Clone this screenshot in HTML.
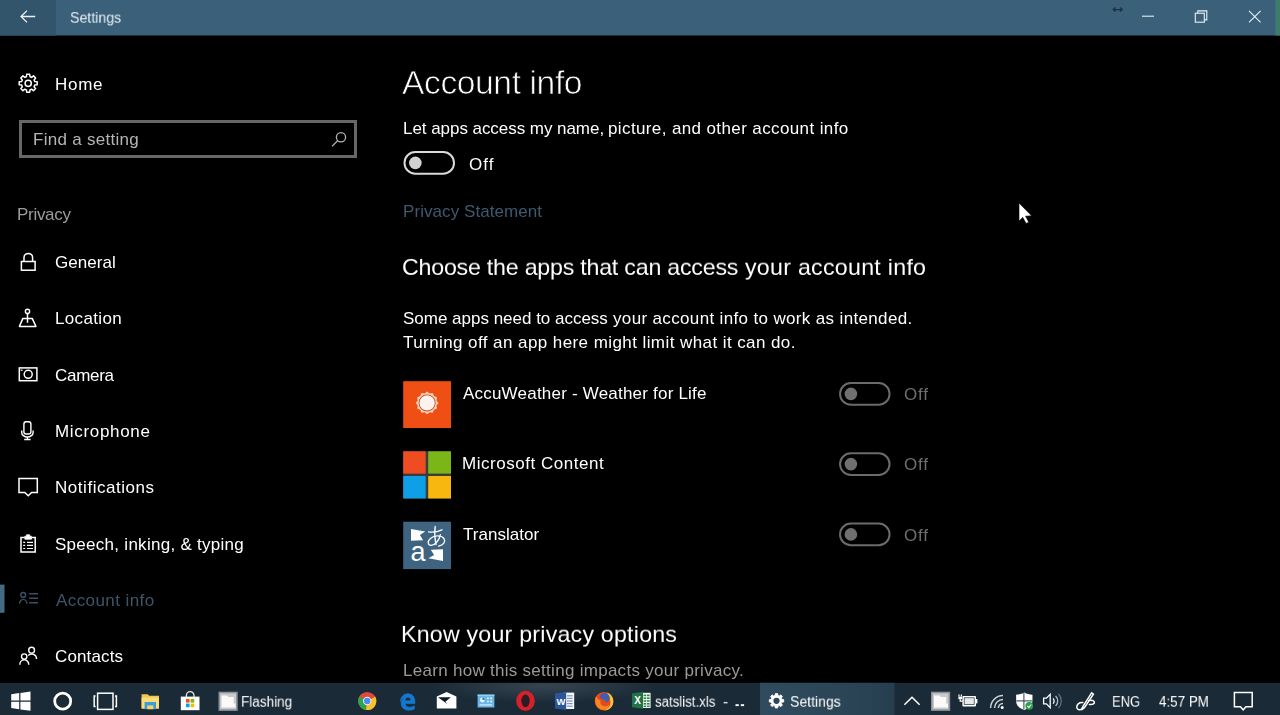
<!DOCTYPE html>
<html><head><meta charset="utf-8">
<style>
*{box-sizing:border-box;margin:0;padding:0}
html,body{width:1280px;height:715px;overflow:hidden;background:#000;font-family:"Liberation Sans",sans-serif;color:#fff}
.abs{position:absolute}
.t{position:absolute;white-space:nowrap;will-change:transform}
svg{position:absolute;left:0;top:0;overflow:visible}
</style></head><body>
<!-- search box -->
<div class="abs" style="left:19px;top:120px;width:338px;height:38px;border:3px solid #676767"></div>

<svg width="1280" height="715" viewBox="0 0 1280 715" fill="none" stroke="#fff" stroke-width="1.5">
<defs><linearGradient id="ab" x1="0" x2="1" y1="0" y2="0"><stop offset="0" stop-color="#2f4b5d"/><stop offset="0.7" stop-color="#2a4455"/><stop offset="1" stop-color="#263f50"/></linearGradient><radialGradient id="cl" cx="0.5" cy="0.5" r="0.5"><stop offset="0" stop-color="#8c9ba5" stop-opacity="0.24"/><stop offset="1" stop-color="#8c9ba5" stop-opacity="0"/></radialGradient><clipPath id="tb"><rect x="0" y="682.8" width="1280" height="32.2"/></clipPath></defs>
<g stroke="none"><rect x="0" y="0" width="1280" height="35.5" fill="#3b607a"/><rect x="0" y="0" width="56" height="35.5" fill="#33556b"/><rect x="1275.5" y="0" width="4.5" height="35.5" fill="#3f7d6b"/><rect x="0" y="584.6" width="4.5" height="28.2" fill="#456a83"/><rect x="403.2" y="381.2" width="47.8" height="46.8" fill="#ef4f14"/><rect x="403.2" y="451.3" width="47.8" height="47.2" fill="#3c3c38"/><rect x="403.2" y="451.3" width="22.5" height="22.3" fill="#f04c22"/><rect x="428.2" y="451.3" width="22.8" height="22.3" fill="#7cb518"/><rect x="403.2" y="476" width="22.5" height="22.5" fill="#0f9fe6"/><rect x="428.2" y="476" width="22.8" height="22.5" fill="#f8b70f"/><rect x="403.2" y="521.7" width="47.8" height="47.4" fill="#3f6482"/><rect x="0" y="682.8" width="1280" height="32.2" fill="#1a2a36"/><ellipse cx="545" cy="686" rx="115" ry="17" fill="url(#cl)" clip-path="url(#tb)"/><rect x="760" y="682.8" width="134.6" height="32.2" fill="url(#ab)"/></g>
<g stroke="#e8f1f6" stroke-width="1.3"><path d="M21 16.5H35.2M27 10.6L21 16.5L27 22.4"/></g>
<g stroke="#e8f1f6" stroke-width="1.1"><path d="M1142 16.2H1154"/><rect x="1195.3" y="13.2" width="9" height="9"/><path d="M1197.8 13.2V10.9H1206.8V19.9H1204.3"/><path d="M1249 10.8L1260.6 22.4M1260.6 10.8L1249 22.4"/></g>
<g stroke="#1d3243" stroke-width="1.4"><path d="M1113.5 9.6H1122M1115.5 7.6L1113.3 9.6L1115.5 11.6M1120 7.6L1122.2 9.6L1120 11.6"/></g>
<path d="M26.41 76.74 L26.71 74.32 L29.69 74.32 L29.99 76.74 L31.57 77.39 L33.49 75.90 L35.60 78.01 L34.11 79.93 L34.76 81.51 L37.18 81.81 L37.18 84.79 L34.76 85.09 L34.11 86.67 L35.60 88.59 L33.49 90.70 L31.57 89.21 L29.99 89.86 L29.69 92.28 L26.71 92.28 L26.41 89.86 L24.83 89.21 L22.91 90.70 L20.80 88.59 L22.29 86.67 L21.64 85.09 L19.22 84.79 L19.22 81.81 L21.64 81.51 L22.29 79.93 L20.80 78.01 L22.91 75.90 L24.83 77.39Z" stroke-width="1.5" stroke-linejoin="round"/><circle cx="28.2" cy="83.3" r="3.1" stroke-width="1.5"/>
<g stroke="#b4b4b4" stroke-width="1.3"><circle cx="341" cy="137.3" r="4.6"/><path d="M337.6 140.8L332 146.4"/></g>
<rect x="21.400" y="261.500" width="13.700" height="8.700"/><path d="M24 261.500V257.600a4.300 4.200 0 0 1 8.600 0V261.500"/>
<circle cx="27.5" cy="311.4" r="2.1" stroke-width="1.4"/><path d="M27.5 313.6V322.8"/><path d="M22.9 318.4L19.4 326.4H35.9L32.2 318.4Z" stroke-linejoin="round"/>
<rect x="19.3" y="367.9" width="17.6" height="12.8"/><circle cx="28.2" cy="374.3" r="4"/><path d="M20.6 370.2H22.6" stroke-width="1.2"/>
<g stroke-width="1.4"><rect x="23.9" y="421.8" width="7" height="12.2" rx="2.2"/><path d="M21.700 430.600V432.400a5.700 4.600 0 0 0 11.400 0V430.600M27.400 437V439.600M24.200 439.500H30.600"/></g>
<path d="M19 478.4H37.3V492.4H31.6L28.2 495.8L24.8 492.4H19Z"/>
<path d="M24.600 537.400H21V552H35.200V537.400H31.600"/><path d="M24.800 539.200V536.200H26.600V534.800H29.700V536.200H31.500V539.200Z" fill="#fff" stroke-width="0.8"/><g stroke-width="1.200"><path d="M23.200 542.300H25.200M27 542.300H33M23.200 545.400H25.200M27 545.400H33M23.200 548.500H25.200M27 548.500H33"/></g>
<g stroke="#3c5064" stroke-width="1.400"><circle cx="23.200" cy="594.900" r="2.400"/><path d="M19.500 603.800a3.700 4.400 0 0 1 7.400 0"/><path d="M29.200 593.700H38M29.200 598.200H38M29.200 602.700H38"/></g>
<g stroke-width="1.4"><circle cx="31.6" cy="650.2" r="2.9"/><path d="M28.2 655.4a5 5 0 0 1 8.4 3.6"/><circle cx="24.2" cy="656.6" r="2.7"/><path d="M19.8 664.8a4.5 5 0 0 1 9 0"/></g>
<path d="M427.10 391.50 L429.61 393.53 L432.80 393.03 L433.96 396.04 L436.97 397.20 L436.47 400.39 L438.50 402.90 L436.47 405.41 L436.97 408.60 L433.96 409.76 L432.80 412.77 L429.61 412.27 L427.10 414.30 L424.59 412.27 L421.40 412.77 L420.24 409.76 L417.23 408.60 L417.73 405.41 L415.70 402.90 L417.73 400.39 L417.23 397.20 L420.24 396.04 L421.40 393.03 L424.59 393.53Z" fill="#fbd3bc" stroke="none"/><circle cx="427.1" cy="402.9" r="8.5" fill="#b8400f" stroke="none"/><circle cx="427.1" cy="402.9" r="7.7" fill="#fdf3ee" stroke="none"/>
<g fill="#fff" stroke="none"><path d="M411 529L425.2 531.4L419.9 535.1L423.1 540.3L411 540.7Z"/><path d="M443 561L428.4 558.2L434.1 554.9L430.8 549.7L443 549.3Z"/></g>
<text x="410.4" y="561.2" font-family="Liberation Sans" font-size="27" fill="#fff" stroke="none">a</text>
<g stroke="#fff" stroke-width="1.3" fill="none" stroke-linecap="round"><path d="M428.6 531.8C433 532.4 438 531.6 442 529.8"/><path d="M435.2 526.4C434.4 532 434.6 538 436 544.6"/><path d="M440.4 534.6C439.4 540 435 545.4 431.2 545.4C427.8 545.4 427 541.4 430.4 538.4C434.2 535.2 441.4 535 444 538.6C446 541.8 443.4 545 438.6 546.2"/></g>
<g fill="#fff" stroke="none"><path d="M11.2 694.2L19.2 693.1V700.5H11.2Z"/><path d="M20.4 692.9L30.5 691.5V700.5H20.4Z"/><path d="M11.2 701.7H19.2V709.2L11.2 708.1Z"/><path d="M20.4 701.7H30.5V710.8L20.4 709.4Z"/></g>
<circle cx="62.7" cy="701.2" r="8" stroke="#fff" stroke-width="2.8"/>
<g stroke="#fff" stroke-width="1.5"><rect x="97.6" y="693.2" width="15.4" height="16.2"/><path d="M95.6 696H94.2V706.6H95.6M115 696H116.4V706.6H115"/></g>
<g stroke="none"><path d="M141.6 694.2H147.6L149.2 695.8H159V708.6H141.6Z" fill="#f5c64b"/><path d="M141.6 697.6H159V708.6H141.6Z" fill="#fbdc7a"/><path d="M144.6 702H156V709.2H144.6Z" fill="#3d9bd8"/><path d="M147.2 705.4H153.4V709.2H147.2Z" fill="#f5d36a"/></g>
<g><path d="M186.4 697V695.4a3.8 3.8 0 0 1 7.6 0V697" stroke="#e8e8e8" stroke-width="1.3" fill="none"/><path d="M180.8 696.6H199.5V710.2H180.8Z" fill="#fff" stroke="none"/><g stroke="none"><rect x="186" y="699" width="3.6" height="3.6" fill="#f25022"/><rect x="190.6" y="699" width="3.6" height="3.6" fill="#7fba00"/><rect x="186" y="703.6" width="3.6" height="3.6" fill="#00a4ef"/><rect x="190.6" y="703.6" width="3.6" height="3.6" fill="#ffb900"/></g></g>
<g stroke="none"><rect x="218.5" y="691.7" width="19.2" height="19.2" fill="#8f9296"/><rect x="220.1" y="693.3" width="16" height="16" fill="#c9cbcd"/><path d="M221.5 695.6H227.0L228.3 697H233.7V704L235.5 703V707.4H221.5Z" fill="#fafafa"/></g>
<g stroke="none"><rect x="931" y="691.7" width="19.2" height="19.2" fill="#8f9296"/><rect x="932.6" y="693.3" width="16" height="16" fill="#c9cbcd"/><path d="M934 695.6H939.5L940.8 697H946.2V704L948 703V707.4H934Z" fill="#fafafa"/></g>
<g stroke="none"><circle cx="367.2" cy="701" r="9.1" fill="#dd4b3e"/><path d="M367.2 701L359.3 696.5A9.1 9.1 0 0 0 366 710Z" fill="#2da44e"/><path d="M367.2 701L366 710A9.1 9.1 0 0 0 375.2 696.6Z" fill="#f7c12c"/><path d="M367.2 701L375.2 696.6L366 696.6Z" fill="#dd4b3e"/><circle cx="367.2" cy="701" r="4.2" fill="#f1f1f1"/><circle cx="367.2" cy="701" r="3.2" fill="#4a8af4"/></g>
<g stroke="none"><path d="M400.4 701.4C400.8 696.6 404 693.8 407.8 693.8C412.4 693.8 414.9 697.2 414.9 702V703.6H405C405.2 706 407 707.2 409.6 707.2C411.4 707.2 413 706.8 414.4 706V709C412.8 709.8 411 710.2 408.8 710.2C404 710.2 401 707.2 401.2 702.6C401.4 700 403 698 405.2 696.8C403 697.4 401.2 699 400.4 701.4ZM405 700.8H410.8C410.8 698.6 409.8 697.2 408 697.2C406.2 697.2 405.2 698.8 405 700.8Z" fill="#1677cf" stroke="#1677cf" stroke-width="0.7"/></g>
<g stroke="none"><path d="M436.8 696.6L446.6 692L456.4 696.6V708.4H436.8Z" fill="#fff"/><path d="M438 697.2L450.8 697.2L445.4 701.8L447.6 704.2Z" fill="#0d1b27"/></g>
<g stroke="none"><rect x="477.6" y="694.6" width="16.8" height="12.9" fill="#6ab4ea"/><rect x="477.6" y="694.6" width="16.8" height="1.4" fill="#8fd0f5"/><circle cx="482.4" cy="700" r="2.4" fill="#e9f6ff"/><path d="M482.4 700V697.6A2.4 2.4 0 0 1 484.8 700Z" fill="#2d7fc0"/><rect x="487" y="697.4" width="1.8" height="1.8" fill="#d7f5d0"/><rect x="490.2" y="697.4" width="1.8" height="1.8" fill="#d7f5d0"/><rect x="487" y="700.6" width="1.8" height="1.8" fill="#d7f5d0"/><rect x="490.2" y="700.6" width="1.8" height="1.8" fill="#d7f5d0"/><rect x="479.6" y="704.2" width="12.6" height="1.4" fill="#c7e6fa"/></g>
<g stroke="none"><ellipse cx="525.5" cy="700.9" rx="9.3" ry="10.1" fill="#d8202a"/><ellipse cx="525.5" cy="700.9" rx="4.2" ry="6.3" fill="#2a1d26"/></g>
<g stroke="none"><rect x="563.4" y="692.6" width="10.8" height="16.4" fill="#f4f6fa"/><g fill="#7f96bd"><rect x="567" y="695.2" width="5.6" height="1.2"/><rect x="567" y="697.8" width="5.6" height="1.2"/><rect x="567" y="700.4" width="5.6" height="1.2"/><rect x="567" y="703" width="5.6" height="1.2"/><rect x="567" y="705.6" width="5.6" height="1.2"/></g><path d="M555 693.6L566.2 692V710L555 708.4Z" fill="#2b579a"/></g>
<text x="556.6" y="705" font-family="Liberation Sans" font-weight="bold" font-size="9.5" fill="#fff" stroke="none">W</text>
<g stroke="none"><circle cx="604" cy="701.2" r="9.3" fill="#e8471f"/><path d="M607 692.400C611.600 694 614 698.400 613.200 703C612.400 707.600 608.400 710.600 604 710.500C608.600 709 610.800 705.600 610.400 701.600C610.200 699.200 609 697.200 607.400 696.200C608.200 694.800 607.800 693.400 607 692.400Z" fill="#fdc52f"/><path d="M600.600 694.600C602.600 692.800 606.200 692.600 608.200 694.400C609.800 695.800 610.200 698 609.400 699.800C608.600 701.600 606.800 702.600 604.800 702.400C605.800 701.800 606.200 700.800 605.800 700C604.600 700.600 603.200 700.200 602.600 699.200C602 698.200 601 698 600.200 698.400C599.800 697 600 695.600 600.600 694.600Z" fill="#3f5fb4"/><path d="M596 696.200C597.200 698.600 598.400 699.800 600.600 700.600C599.800 702.400 600.600 704.800 602.600 705.800C605 707 607.800 706.200 609.200 704.200C609.200 707.400 606.600 709.800 603.400 709.800C599.400 709.800 596.200 706.600 595.600 702.800C595.200 700.400 595.400 698 596 696.200Z" fill="#f6891f"/></g>
<g stroke="none"><rect x="641" y="692.8" width="9.6" height="15.2" fill="#eef5ef"/><g fill="#2f8452"><rect x="643.6" y="694.6" width="2.6" height="1.6"/><rect x="647" y="694.6" width="2.6" height="1.6"/><rect x="643.6" y="697.4" width="2.6" height="1.6"/><rect x="647" y="697.4" width="2.6" height="1.6"/><rect x="643.6" y="700.2" width="2.6" height="1.6"/><rect x="647" y="700.2" width="2.6" height="1.6"/><rect x="643.6" y="703" width="2.6" height="1.6"/><rect x="647" y="703" width="2.6" height="1.6"/><rect x="643.6" y="705.6" width="2.6" height="1.4"/><rect x="647" y="705.6" width="2.6" height="1.4"/></g><path d="M632 693.400L643 691.800V708.800L632 707.200Z" fill="#227447"/></g>
<text x="634.2" y="704.2" font-family="Liberation Sans" font-weight="bold" font-size="10" fill="#fff" stroke="none">X</text>
<path d="M775.05 695.49 L775.30 693.60 L777.70 693.60 L777.95 695.49 L779.23 696.02 L780.74 694.86 L782.44 696.56 L781.28 698.07 L781.81 699.35 L783.70 699.60 L783.70 702.00 L781.81 702.25 L781.28 703.53 L782.44 705.04 L780.74 706.74 L779.23 705.58 L777.95 706.11 L777.70 708.00 L775.30 708.00 L775.05 706.11 L773.77 705.58 L772.26 706.74 L770.56 705.04 L771.72 703.53 L771.19 702.25 L769.30 702.00 L769.30 699.60 L771.19 699.35 L771.72 698.07 L770.56 696.56 L772.26 694.86 L773.77 696.02Z" fill="#fff" stroke="#fff" stroke-width="0.8" stroke-linejoin="round"/><circle cx="776.5" cy="700.8" r="3.1" fill="#2c4759" stroke="none"/>
<path d="M904.4 704.8L912 697.2L919.6 704.8" stroke="#fff" stroke-width="1.5"/>
<g transform="translate(-1.2,-0.4)"><g stroke="none" fill="#fff"><rect x="963.6" y="696.4" width="13.6" height="10.4" rx="0.8"/><rect x="977.2" y="699.4" width="1.4" height="4.4"/></g><rect x="965.4" y="698.2" width="10" height="6.8" fill="#e9e9e9" stroke="#1d2f40" stroke-width="0.7"/><g stroke="#fff" stroke-width="1.2" fill="#fff"><path d="M960.2 695V697M962.600 695V697"/><rect x="959.6" y="697" width="3.6" height="2.6" stroke="none"/><path d="M961.4 699.6V701.6H964" fill="none"/></g></g>
<g stroke="#cfd3d6" stroke-width="1.5" fill="none"><path d="M990.6 708A12.4 12.4 0 0 1 1003 695.600"/><path d="M994.6 708A8.4 8.4 0 0 1 1003 699.600"/><path d="M998.4 708A4.600 4.600 0 0 1 1003 703.400"/></g><circle cx="1002.2" cy="707.4" r="1.5" fill="#fff" stroke="none"/>
<g stroke="none" transform="translate(1024.3,701.3) scale(0.95) translate(-1024.4,-701.6)"><path d="M1024.400 692.400C1027 693.800 1030 694.600 1033 694.600V701.400C1033 706 1029.400 709.400 1024.400 710.800C1019.400 709.400 1015.800 706 1015.800 701.400V694.600C1018.800 694.600 1021.800 693.800 1024.400 692.400Z" fill="#fff"/><path d="M1024 693V710M1016 701.200H1033" stroke="#1d2f40" stroke-width="1"/><circle cx="1029.600" cy="706.400" r="4.100" fill="#2c9f4b"/><path d="M1027.600 706.400L1029.200 708L1031.800 705" stroke="#fff" stroke-width="1.100" fill="none"/></g>
<g stroke="#fff" stroke-width="1.300" fill="none"><path d="M1043.600 698.200H1046.400L1050.200 694.400V707.600L1046.400 703.800H1043.600Z"/><path d="M1053 698.400A3.600 3.600 0 0 1 1053 703.600"/><path d="M1055.600 696A7 7 0 0 1 1055.600 706" stroke="#b8bec3"/><path d="M1058.400 693.800A10.400 10.400 0 0 1 1058.400 708.200" stroke="#5f6d79"/></g>
<g stroke="#fff" stroke-width="1.500" fill="none" stroke-linecap="round"><path d="M1091.600 692.800L1083 706.400L1081.400 709.800L1084.400 707.600L1093.400 694.200Z"/><path d="M1082.800 702.600C1079 702.400 1076.400 704.600 1076.800 707.400C1077.200 710 1080.400 710.600 1082.400 708.400"/><path d="M1088.600 700.600C1091.600 699.600 1094.600 700.800 1094.400 702.600C1094.200 704 1092 704.600 1089.400 704.400"/></g>
<path d="M1234.400 692.500H1252.200V706.800H1246L1243.200 709.800L1240.400 706.800H1234.400Z" stroke="#fff" stroke-width="1.500"/>
<path d="M1019 203V221L1022.800 217.400L1026 223.400L1028.800 222.200L1025.600 216.200L1031.600 215.800Z" fill="#fff" stroke="#000" stroke-width="0.6"/>
<g fill="#fff" stroke="none"><rect x="735.5" y="704.2" width="3.3" height="1.9"/><rect x="740.8" y="704.2" width="3.3" height="1.9"/></g>
<rect x="404.50" y="152.10" width="49.5" height="21.6" rx="10.8" stroke="#dadada" stroke-width="2" fill="none"/><circle cx="415.35" cy="162.9" r="6.3" fill="#d2d2d2" stroke="none"/>
<rect x="840.05" y="383.10" width="49.5" height="21.6" rx="10.8" stroke="#6b6b6b" stroke-width="2" fill="none"/><circle cx="850.90" cy="393.9" r="6.3" fill="#707070" stroke="none"/>
<rect x="840.05" y="453.30" width="49.5" height="21.6" rx="10.8" stroke="#6b6b6b" stroke-width="2" fill="none"/><circle cx="850.90" cy="464.1" r="6.3" fill="#707070" stroke="none"/>
<rect x="840.05" y="523.60" width="49.5" height="21.6" rx="10.8" stroke="#6b6b6b" stroke-width="2" fill="none"/><circle cx="850.90" cy="534.4" r="6.3" fill="#707070" stroke="none"/>
</svg>

<div class="t" style="left:69.79px;top:11.00px;font-size:15.6px;line-height:15.6px;letter-spacing:0.000px;color:#e4edf3;transform:scale(0.9073,0.9);transform-origin:0 0;">Settings</div>
<div class="t" style="left:54.60px;top:76.00px;font-size:17px;line-height:17px;letter-spacing:0.733px;color:#fff;">Home</div>
<div class="t" style="left:33.10px;top:131.00px;font-size:17px;line-height:17px;letter-spacing:0.285px;color:#b4b4b4;">Find a setting</div>
<div class="t" style="left:16.90px;top:206.00px;font-size:17px;line-height:17px;letter-spacing:-0.300px;color:#9c9c9c;">Privacy</div>
<div class="t" style="left:54.90px;top:254.00px;font-size:17px;line-height:17px;letter-spacing:0.050px;color:#fff;">General</div>
<div class="t" style="left:54.90px;top:310.00px;font-size:17px;line-height:17px;letter-spacing:0.343px;color:#fff;">Location</div>
<div class="t" style="left:54.90px;top:367.00px;font-size:17px;line-height:17px;letter-spacing:-0.300px;color:#fff;">Camera</div>
<div class="t" style="left:54.90px;top:423.00px;font-size:17px;line-height:17px;letter-spacing:0.667px;color:#fff;">Microphone</div>
<div class="t" style="left:54.90px;top:479.00px;font-size:17px;line-height:17px;letter-spacing:0.542px;color:#fff;">Notifications</div>
<div class="t" style="left:54.90px;top:536.00px;font-size:17px;line-height:17px;letter-spacing:0.278px;color:#fff;">Speech, inking, &amp; typing</div>
<div class="t" style="left:56.30px;top:592.00px;font-size:17px;line-height:17px;letter-spacing:0.418px;color:#3e5468;">Account info</div>
<div class="t" style="left:54.90px;top:648.00px;font-size:17px;line-height:17px;letter-spacing:0.143px;color:#fff;">Contacts</div>
<div class="t" style="left:402.20px;top:66.00px;font-size:33.6px;line-height:33.6px;letter-spacing:-0.391px;color:#fff;-webkit-text-stroke:0.75px #000;">Account info</div>
<div class="t" style="left:402.80px;top:120.00px;font-size:17px;line-height:17px;letter-spacing:-0.048px;color:#fff;">Let apps access my name,</div>
<div class="t" style="left:608.10px;top:120.00px;font-size:17px;line-height:17px;letter-spacing:0.383px;color:#fff;">picture, and other account info</div>
<div class="t" style="left:468.80px;top:156.00px;font-size:17px;line-height:17px;letter-spacing:1.100px;color:#fff;">Off</div>
<div class="t" style="left:402.80px;top:203.00px;font-size:17px;line-height:17px;letter-spacing:0.069px;color:#3f586f;">Privacy Statement</div>
<div class="t" style="left:401.80px;top:257.00px;font-size:23.2px;line-height:23.2px;letter-spacing:-0.217px;color:#fff;transform:scaleY(0.94);transform-origin:0 0;">Choose the apps that can access</div>
<div class="t" style="left:744.70px;top:257.00px;font-size:23.2px;line-height:23.2px;letter-spacing:0.275px;color:#fff;transform:scaleY(0.94);transform-origin:0 0;">your account info</div>
<div class="t" style="left:402.80px;top:310.00px;font-size:17px;line-height:17px;letter-spacing:-0.009px;color:#fff;">Some apps need to access</div>
<div class="t" style="left:613.40px;top:310.00px;font-size:17px;line-height:17px;letter-spacing:0.349px;color:#fff;">your account info to work as intended.</div>
<div class="t" style="left:403.40px;top:334.00px;font-size:17px;line-height:17px;letter-spacing:0.422px;color:#fff;">Turning off an app here might limit what it can do.</div>
<div class="t" style="left:463.00px;top:385.00px;font-size:17px;line-height:17px;letter-spacing:0.207px;color:#fff;">AccuWeather - Weather for Life</div>
<div class="t" style="left:462.20px;top:455.00px;font-size:17px;line-height:17px;letter-spacing:0.525px;color:#fff;">Microsoft Content</div>
<div class="t" style="left:462.60px;top:526.00px;font-size:17px;line-height:17px;letter-spacing:0.022px;color:#fff;">Translator</div>
<div class="t" style="left:904.30px;top:386.00px;font-size:17px;line-height:17px;letter-spacing:0.750px;color:#6e6e6e;">Off</div>
<div class="t" style="left:904.30px;top:456.00px;font-size:17px;line-height:17px;letter-spacing:0.750px;color:#6e6e6e;">Off</div>
<div class="t" style="left:904.30px;top:527.00px;font-size:17px;line-height:17px;letter-spacing:0.750px;color:#6e6e6e;">Off</div>
<div class="t" style="left:400.70px;top:624.00px;font-size:23.2px;line-height:23.2px;letter-spacing:0.221px;color:#fff;transform:scaleY(0.94);transform-origin:0 0;">Know your privacy options</div>
<div class="t" style="left:402.80px;top:662.00px;font-size:17px;line-height:17px;letter-spacing:0.284px;color:#9a9a9a;">Learn how this setting impacts your privacy.</div>
<div class="t" style="left:240.63px;top:695.00px;font-size:15.6px;line-height:15.6px;letter-spacing:0.000px;color:#fff;transform:scale(0.8684,0.9);transform-origin:0 0;">Flashing</div>
<div class="t" style="left:654.65px;top:695.00px;font-size:15.6px;line-height:15.6px;letter-spacing:0.000px;color:#fff;transform:scale(0.8500,0.9);transform-origin:0 0;">satslist.xls</div>
<div class="t" style="left:723.00px;top:695.00px;font-size:15.6px;line-height:15.6px;letter-spacing:0.000px;color:#fff;transform:scaleY(0.9);transform-origin:0 0;">-</div>
<div class="t" style="left:789.60px;top:695.00px;font-size:15.6px;line-height:15.6px;letter-spacing:0.000px;color:#fff;transform:scale(0.9000,0.9);transform-origin:0 0;">Settings</div>
<div class="t" style="left:1111.67px;top:695.00px;font-size:15.6px;line-height:15.6px;letter-spacing:0.000px;color:#fff;transform:scale(0.8281,0.9);transform-origin:0 0;">ENG</div>
<div class="t" style="left:1158.50px;top:695.00px;font-size:15.6px;line-height:15.6px;letter-spacing:0.000px;color:#fff;transform:scale(0.8596,0.9);transform-origin:0 0;">4:57 PM</div>

</body></html>
